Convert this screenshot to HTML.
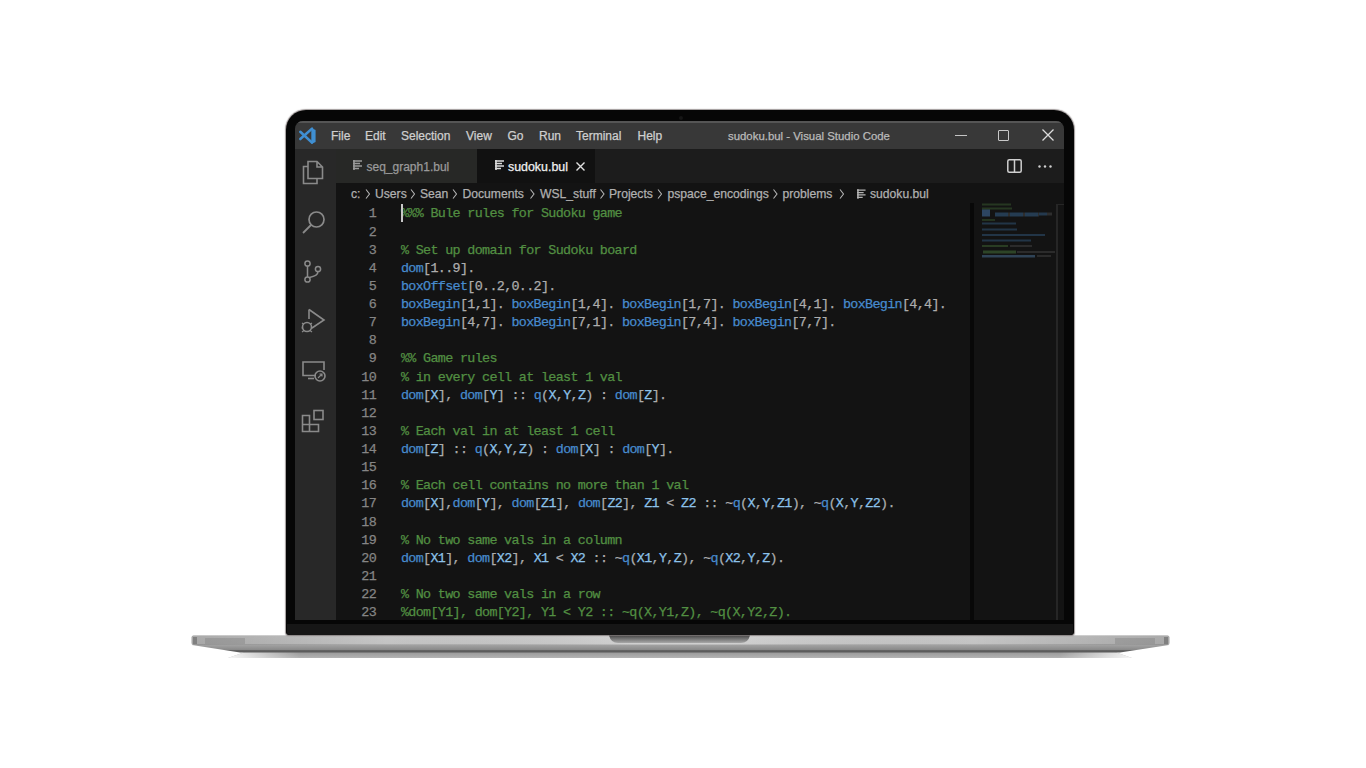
<!DOCTYPE html>
<html><head><meta charset="utf-8">
<style>
html,body{margin:0;padding:0;}
body{width:1366px;height:768px;background:#fff;position:relative;overflow:hidden;font-family:"Liberation Sans",sans-serif;}
.a{position:absolute;}
#lid{left:286px;top:110px;width:788px;height:525px;background:#060606;border-radius:20px 20px 3px 3px;box-shadow:0 0 1px 0.8px rgba(80,70,70,0.55);}
#chin{left:287px;top:624px;width:786px;height:11px;background:#161616;border-radius:0 0 3px 3px;}
#screen{left:295px;top:121px;width:769px;height:499px;background:#131313;overflow:hidden;border-radius:8px 8px 0 0;}
#title{left:0;top:0;width:769px;height:28px;background:#383838;border-top:2px solid #555555;box-sizing:border-box;}
.ui{position:absolute;font-size:12px;line-height:14px;white-space:nowrap;}
.menu{color:#cfcfcf;top:8px;}
#act{left:0;top:28px;width:41px;height:471px;background:#282828;}
#tabs{left:41px;top:28px;width:728px;height:33.5px;background:#1c1c1c;}
#tab1{left:41px;top:28px;width:141px;height:33.5px;background:#272826;}
#tab2{left:182px;top:28px;width:118px;height:33.5px;background:#111111;}
.crumb{color:#b0b0b0;top:66px;font-size:12.15px !important;}
.code{position:absolute;left:106px;top:84.4px;font-family:"Liberation Mono",monospace;font-size:13.4px;letter-spacing:-0.67px;line-height:18.12px;white-space:pre;color:#adadad;}
.ln{position:absolute;left:39px;top:84.4px;width:42px;text-align:right;font-family:"Liberation Mono",monospace;font-size:13.4px;letter-spacing:-0.67px;line-height:18.12px;color:#858585;white-space:pre;}
.code,.ln,.ui{-webkit-text-stroke:0.25px currentColor;}
.c{color:#528f42}.k{color:#478bce}.v{color:#8cc2ea}
#mm{left:675px;top:82px;width:4px;height:417px;background:#080808;}
#sb{left:761px;top:82.5px;width:2px;height:417px;background:#262626;}
#sbt{left:761px;top:82.5px;width:8px;height:1px;background:#262626;}
svg{position:absolute;overflow:visible;}
</style></head>
<body>
<!-- base -->
<svg class="a" style="left:0;top:0" width="1366" height="768">
  <defs>
    <linearGradient id="gTop" x1="0" y1="635" x2="0" y2="645" gradientUnits="userSpaceOnUse">
      <stop offset="0" stop-color="#a8a8a8"/>
      <stop offset="0.15" stop-color="#cdcdcd"/>
      <stop offset="0.85" stop-color="#c9c9c9"/>
      <stop offset="1" stop-color="#a6a6a6"/>
    </linearGradient>
    <linearGradient id="gMid" x1="0" y1="645" x2="0" y2="652.5" gradientUnits="userSpaceOnUse">
      <stop offset="0" stop-color="#a2a2a2"/>
      <stop offset="0.6" stop-color="#8a8a8a"/>
      <stop offset="0.75" stop-color="#5e5e5e"/>
      <stop offset="1" stop-color="#5a5a5a"/>
    </linearGradient>
    <linearGradient id="gFoot" x1="0" y1="652.5" x2="0" y2="658" gradientUnits="userSpaceOnUse">
      <stop offset="0" stop-color="#9a9a9a"/>
      <stop offset="1" stop-color="#b4b4b4"/>
    </linearGradient>
    <linearGradient id="gFootFade" x1="228" y1="0" x2="1132" y2="0" gradientUnits="userSpaceOnUse">
      <stop offset="0" stop-color="#fff" stop-opacity="0.9"/>
      <stop offset="0.08" stop-color="#fff" stop-opacity="0.0"/>
      <stop offset="0.92" stop-color="#fff" stop-opacity="0.0"/>
      <stop offset="1" stop-color="#fff" stop-opacity="0.9"/>
    </linearGradient>
    <linearGradient id="gShade" x1="192" y1="0" x2="1169" y2="0" gradientUnits="userSpaceOnUse">
      <stop offset="0" stop-color="#000" stop-opacity="0.17"/>
      <stop offset="0.2" stop-color="#000" stop-opacity="0.03"/>
      <stop offset="0.45" stop-color="#fff" stop-opacity="0.12"/>
      <stop offset="0.55" stop-color="#fff" stop-opacity="0.12"/>
      <stop offset="0.8" stop-color="#000" stop-opacity="0.03"/>
      <stop offset="1" stop-color="#000" stop-opacity="0.17"/>
    </linearGradient>
  </defs>
  <path d="M228 658 L245 652 L1115 652 L1132 658 Z" fill="url(#gFoot)"/><path d="M228 658 L245 652 L1115 652 L1132 658 Z" fill="url(#gFootFade)"/>
  <path d="M192 645 L1169 645 L1120 652.5 L240 652.5 Z" fill="url(#gMid)"/>
  <rect x="191.5" y="635.5" width="978" height="9.5" rx="2" fill="url(#gTop)"/>
  <rect x="191.5" y="635.5" width="978" height="9.5" rx="2" fill="url(#gShade)"/>
  <rect x="193" y="637" width="4" height="7" fill="#666" opacity="0.6"/><rect x="205" y="638" width="40" height="6" fill="#777" opacity="0.35"/>
  <rect x="1164" y="637" width="4" height="7" fill="#666" opacity="0.6"/><rect x="1115" y="638" width="40" height="6" fill="#777" opacity="0.35"/>
  <path d="M609 635.5 L750 635.5 Q748 643 741 643 L618 643 Q611 643 609 635.5 Z" fill="url(#gNotch)"/>
  <defs><linearGradient id="gNotch" x1="0" y1="635.5" x2="0" y2="643" gradientUnits="userSpaceOnUse"><stop offset="0" stop-color="#4a4a4a"/><stop offset="1" stop-color="#a8a8a8"/></linearGradient></defs>
</svg>
<div class="a" id="lid"></div>
<div class="a" id="chin"></div>
<div class="a" style="left:679px;top:115.5px;width:4px;height:4px;border-radius:50%;background:#161616"></div>
<div class="a" id="screen">
  <div class="a" id="title"></div>
  <svg style="left:4px;top:6px" width="18" height="18" viewBox="0 0 18 18">
    <path d="M12.3 1 L16.6 3 V15 L12.3 17 Z" fill="#3f8fd2"/>
    <path d="M1.3 4.8 L13 15.6 M13 1.6 L1.3 12" stroke="#3f8fd2" stroke-width="2.6" stroke-linecap="round"/>
  </svg>
  <div class="ui menu" style="left:36px">File</div>
  <div class="ui menu" style="left:70px">Edit</div>
  <div class="ui menu" style="left:106px">Selection</div>
  <div class="ui menu" style="left:171px">View</div>
  <div class="ui menu" style="left:212.5px">Go</div>
  <div class="ui menu" style="left:244px">Run</div>
  <div class="ui menu" style="left:281px">Terminal</div>
  <div class="ui menu" style="left:342.5px">Help</div>
  <div class="ui menu" style="left:433px;font-size:11.4px;color:#bababa">sudoku.bul - Visual Studio Code</div>
  <!-- window controls -->
  <div class="a" style="left:659.5px;top:13.5px;width:12px;height:1.6px;background:#c4c4c4"></div>
  <div class="a" style="left:703px;top:9px;width:11px;height:10.5px;border:1.6px solid #c8c8c8;border-radius:1px;box-sizing:border-box"></div>
  <svg style="left:747px;top:8.3px" width="12" height="12" viewBox="0 0 12 12"><path d="M0.5 0.5 L11.5 11.5 M11.5 0.5 L0.5 11.5" stroke="#dcdcdc" stroke-width="1.3"/></svg>

  <div class="a" id="act"></div>
  <!-- activity icons -->
  <svg style="left:7px;top:39px" width="22" height="25" viewBox="0 0 22 25">
    <path d="M6 1.5 H15 L20.5 7 V18.5 H6 Z M15 1.5 V7 H20.5" fill="none" stroke="#8a8a8a" stroke-width="1.6"/>
    <path d="M6 6.5 H1.5 V23.5 H15 V18.5" fill="none" stroke="#8a8a8a" stroke-width="1.6"/>
  </svg>
  <svg style="left:7px;top:89px" width="24" height="24" viewBox="0 0 24 24">
    <circle cx="14.5" cy="9.5" r="7.5" fill="none" stroke="#8a8a8a" stroke-width="1.7"/>
    <path d="M9 15 L1 23" stroke="#8a8a8a" stroke-width="1.8"/>
  </svg>
  <svg style="left:8px;top:139px" width="20" height="24" viewBox="0 0 20 24">
    <circle cx="4.5" cy="3.5" r="2.6" fill="none" stroke="#8a8a8a" stroke-width="1.5"/>
    <circle cx="4.5" cy="19.5" r="2.6" fill="none" stroke="#8a8a8a" stroke-width="1.5"/>
    <circle cx="15" cy="9" r="2.6" fill="none" stroke="#8a8a8a" stroke-width="1.5"/>
    <path d="M4.5 6 V17 M15 11.6 Q15 16 6.5 17.5" fill="none" stroke="#8a8a8a" stroke-width="1.5"/>
  </svg>
  <svg style="left:6px;top:187px" width="24" height="26" viewBox="0 0 24 26">
    <path d="M8 1.5 L23 12 L11 20" fill="none" stroke="#8a8a8a" stroke-width="1.6"/>
    <path d="M8 1.5 V11" fill="none" stroke="#8a8a8a" stroke-width="1.6"/>
    <circle cx="6" cy="19" r="4.5" fill="none" stroke="#8a8a8a" stroke-width="1.6"/>
    <path d="M1 15 L3 16.5 M11 15 L9 16.5 M0.5 20 H2 M10 20 H11.5 M1 24 L3 22.5 M11 24 L9 22.5" stroke="#8a8a8a" stroke-width="1.2"/>
  </svg>
  <svg style="left:7px;top:240px" width="24" height="21" viewBox="0 0 24 21">
    <path d="M14 14.5 H1 V1 H22 V9" fill="none" stroke="#8a8a8a" stroke-width="1.6"/>
    <path d="M6 17.5 H12" stroke="#8a8a8a" stroke-width="1.6"/>
    <circle cx="18" cy="15" r="5" fill="none" stroke="#8a8a8a" stroke-width="1.6"/>
    <path d="M16 17 L20 13 M17.5 13 H20 V15.5" fill="none" stroke="#8a8a8a" stroke-width="1.1"/>
  </svg>
  <svg style="left:6px;top:288px" width="24" height="24" viewBox="0 0 24 24">
    <path d="M1.5 6.5 H8.5 V15.5 H17.5 V22.5 H1.5 Z M1.5 15.5 H8.5 V22.5" fill="none" stroke="#8a8a8a" stroke-width="1.6"/>
    <rect x="13" y="1.5" width="9" height="9" fill="none" stroke="#8a8a8a" stroke-width="1.6"/>
  </svg>

  <div class="a" id="tabs"></div>
  <div class="a" id="tab1"></div>
  <div class="a" id="tab2"></div>
  <!-- file icons -->
  <svg style="left:57.5px;top:39px" width="10" height="10" viewBox="0 0 10 10"><path d="M0 1 H9 M0 3.5 H7 M0 6 H9 M0 8.5 H6" stroke="#9a9a9a" stroke-width="1.4"/><path d="M1 0 V10" stroke="#9a9a9a" stroke-width="1.6"/></svg>
  <div class="ui" style="left:71.5px;top:38.7px;color:#9a9a9a">seq_graph1.bul</div>
  <svg style="left:199.5px;top:39px" width="10" height="10" viewBox="0 0 10 10"><path d="M0 1 H9 M0 3.5 H7 M0 6 H9 M0 8.5 H6" stroke="#dcdcdc" stroke-width="1.4"/><path d="M1 0 V10" stroke="#dcdcdc" stroke-width="1.6"/></svg>
  <div class="ui" style="left:213px;top:38.5px;color:#f0f0f0;font-size:12.4px">sudoku.bul</div>
  <svg style="left:280.5px;top:41px" width="9" height="9" viewBox="0 0 9 9"><path d="M0.5 0.5 L8.5 8.5 M8.5 0.5 L0.5 8.5" stroke="#e0e0e0" stroke-width="1.4"/></svg>
  <!-- split / more -->
  <svg style="left:712px;top:38px" width="15" height="14" viewBox="0 0 15 14"><rect x="0.8" y="0.8" width="13.4" height="12.4" rx="1.5" fill="none" stroke="#cfcfcf" stroke-width="1.5"/><path d="M7.5 1 V13" stroke="#cfcfcf" stroke-width="1.5"/></svg>
  <svg style="left:743px;top:44px" width="14" height="3" viewBox="0 0 14 3"><circle cx="1.5" cy="1.5" r="1.2" fill="#cfcfcf"/><circle cx="7" cy="1.5" r="1.2" fill="#cfcfcf"/><circle cx="12.5" cy="1.5" r="1.2" fill="#cfcfcf"/></svg>

  <!-- breadcrumbs -->
  <div class="ui crumb" style="left:56px">c:</div>
  <div class="ui crumb" style="left:80px">Users</div>
  <div class="ui crumb" style="left:125px">Sean</div>
  <div class="ui crumb" style="left:167.5px">Documents</div>
  <div class="ui crumb" style="left:245px">WSL_stuff</div>
  <div class="ui crumb" style="left:314px">Projects</div>
  <div class="ui crumb" style="left:372.5px">pspace_encodings</div>
  <div class="ui crumb" style="left:487.5px">problems</div>
  <div class="ui crumb" style="left:575px">sudoku.bul</div>
  <svg style="left:0;top:0" width="769" height="90">
    <g fill="none" stroke="#b4b4b4" stroke-width="1.1">
      <path d="M71 68.5 L74.5 73 L71 77.5"/>
      <path d="M116 68.5 L119.5 73 L116 77.5"/>
      <path d="M158 68.5 L161.5 73 L158 77.5"/>
      <path d="M235.5 68.5 L239 73 L235.5 77.5"/>
      <path d="M305.5 68.5 L309 73 L305.5 77.5"/>
      <path d="M363 68.5 L366.5 73 L363 77.5"/>
      <path d="M478.5 68.5 L482 73 L478.5 77.5"/>
      <path d="M545 68.5 L548.5 73 L545 77.5"/>
    </g>
  </svg>
  <svg style="left:561.5px;top:67.5px" width="9.5" height="10" viewBox="0 0 10 10"><path d="M0 1 H9 M0 3.5 H7 M0 6 H9 M0 8.5 H6" stroke="#b4b4b4" stroke-width="1.4"/><path d="M1 0 V10" stroke="#b4b4b4" stroke-width="1.6"/></svg>

  <div class="ln">1
2
3
4
5
6
7
8
9
10
11
12
13
14
15
16
17
18
19
20
21
22
23</div>
  <div class="code"><span class="c">%%% Bule rules for Sudoku game</span>

<span class="c">% Set up domain for Sudoku board</span>
<span class="k">dom</span>[1..9].
<span class="k">boxOffset</span>[0..2,0..2].
<span class="k">boxBegin</span>[1,1]. <span class="k">boxBegin</span>[1,4]. <span class="k">boxBegin</span>[1,7]. <span class="k">boxBegin</span>[4,1]. <span class="k">boxBegin</span>[4,4].
<span class="k">boxBegin</span>[4,7]. <span class="k">boxBegin</span>[7,1]. <span class="k">boxBegin</span>[7,4]. <span class="k">boxBegin</span>[7,7].

<span class="c">%% Game rules</span>
<span class="c">% in every cell at least 1 val</span>
<span class="k">dom</span>[<span class="v">X</span>], <span class="k">dom</span>[<span class="v">Y</span>] :: <span class="k">q</span>(<span class="v">X</span>,<span class="v">Y</span>,<span class="v">Z</span>) : <span class="k">dom</span>[<span class="v">Z</span>].

<span class="c">% Each val in at least 1 cell</span>
<span class="k">dom</span>[<span class="v">Z</span>] :: <span class="k">q</span>(<span class="v">X</span>,<span class="v">Y</span>,<span class="v">Z</span>) : <span class="k">dom</span>[<span class="v">X</span>] : <span class="k">dom</span>[<span class="v">Y</span>].

<span class="c">% Each cell contains no more than 1 val</span>
<span class="k">dom</span>[<span class="v">X</span>],<span class="k">dom</span>[<span class="v">Y</span>], <span class="k">dom</span>[<span class="v">Z1</span>], <span class="k">dom</span>[<span class="v">Z2</span>], <span class="v">Z1</span> &lt; <span class="v">Z2</span> :: ~<span class="k">q</span>(<span class="v">X</span>,<span class="v">Y</span>,<span class="v">Z1</span>), ~<span class="k">q</span>(<span class="v">X</span>,<span class="v">Y</span>,<span class="v">Z2</span>).

<span class="c">% No two same vals in a column</span>
<span class="k">dom</span>[<span class="v">X1</span>], <span class="k">dom</span>[<span class="v">X2</span>], <span class="v">X1</span> &lt; <span class="v">X2</span> :: ~<span class="k">q</span>(<span class="v">X1</span>,<span class="v">Y</span>,<span class="v">Z</span>), ~<span class="k">q</span>(<span class="v">X2</span>,<span class="v">Y</span>,<span class="v">Z</span>).

<span class="c">% No two same vals in a row</span>
<span class="c">%dom[Y1], dom[Y2], Y1 &lt; Y2 :: ~q(X,Y1,Z), ~q(X,Y2,Z).</span></div>
  <div class="a" style="left:106px;top:82.5px;width:2px;height:18.5px;background:#c8c8c8"></div>

  <div class="a" id="mm"></div>
  <div class="a" id="sb"></div>
  <div class="a" id="sbt"></div>
  <svg style="left:0;top:0" width="769" height="499"><rect x="687" y="82.5" width="29" height="2" fill="#5c9a4a" opacity="0.27"/><rect x="687" y="86.5" width="30" height="2" fill="#5c9a4a" opacity="0.27"/><rect x="687" y="88.5" width="8" height="7" fill="#4d82c0" opacity="0.45"/><rect x="700" y="91.5" width="13" height="4" fill="#4d92d6" opacity="0.33"/><rect x="713" y="91.5" width="2" height="4" fill="#aaa" opacity="0.18"/><rect x="715" y="91.5" width="13" height="4" fill="#4d92d6" opacity="0.33"/><rect x="728" y="91.5" width="2" height="4" fill="#aaa" opacity="0.18"/><rect x="730" y="91.5" width="13" height="4" fill="#4d92d6" opacity="0.33"/><rect x="743" y="91.5" width="1" height="4" fill="#aaa" opacity="0.18"/><rect x="744" y="91.5" width="8" height="3" fill="#4d92d6" opacity="0.30"/><rect x="752" y="91.5" width="5" height="3" fill="#aaa" opacity="0.18"/><rect x="687" y="98" width="13" height="2" fill="#5c9a4a" opacity="0.24"/><rect x="687" y="101.5" width="34" height="2" fill="#4d92d6" opacity="0.27"/><rect x="687" y="107.5" width="35" height="2" fill="#4d92d6" opacity="0.27"/><rect x="687" y="113" width="63" height="2" fill="#4d92d6" opacity="0.27"/><rect x="687" y="118.5" width="49" height="2" fill="#4d92d6" opacity="0.27"/><rect x="687" y="124" width="26" height="2" fill="#5c9a4a" opacity="0.30"/><rect x="715" y="124" width="22" height="2" fill="#999" opacity="0.18"/><rect x="688" y="129.5" width="33" height="3" fill="#5c9a4a" opacity="0.36"/><rect x="722" y="130" width="38" height="2" fill="#999" opacity="0.18"/><rect x="687" y="134" width="53" height="2.5" fill="#6aa6e0" opacity="0.33"/><rect x="742" y="134" width="14" height="2" fill="#999" opacity="0.18"/></svg>
</div>
</body></html>
